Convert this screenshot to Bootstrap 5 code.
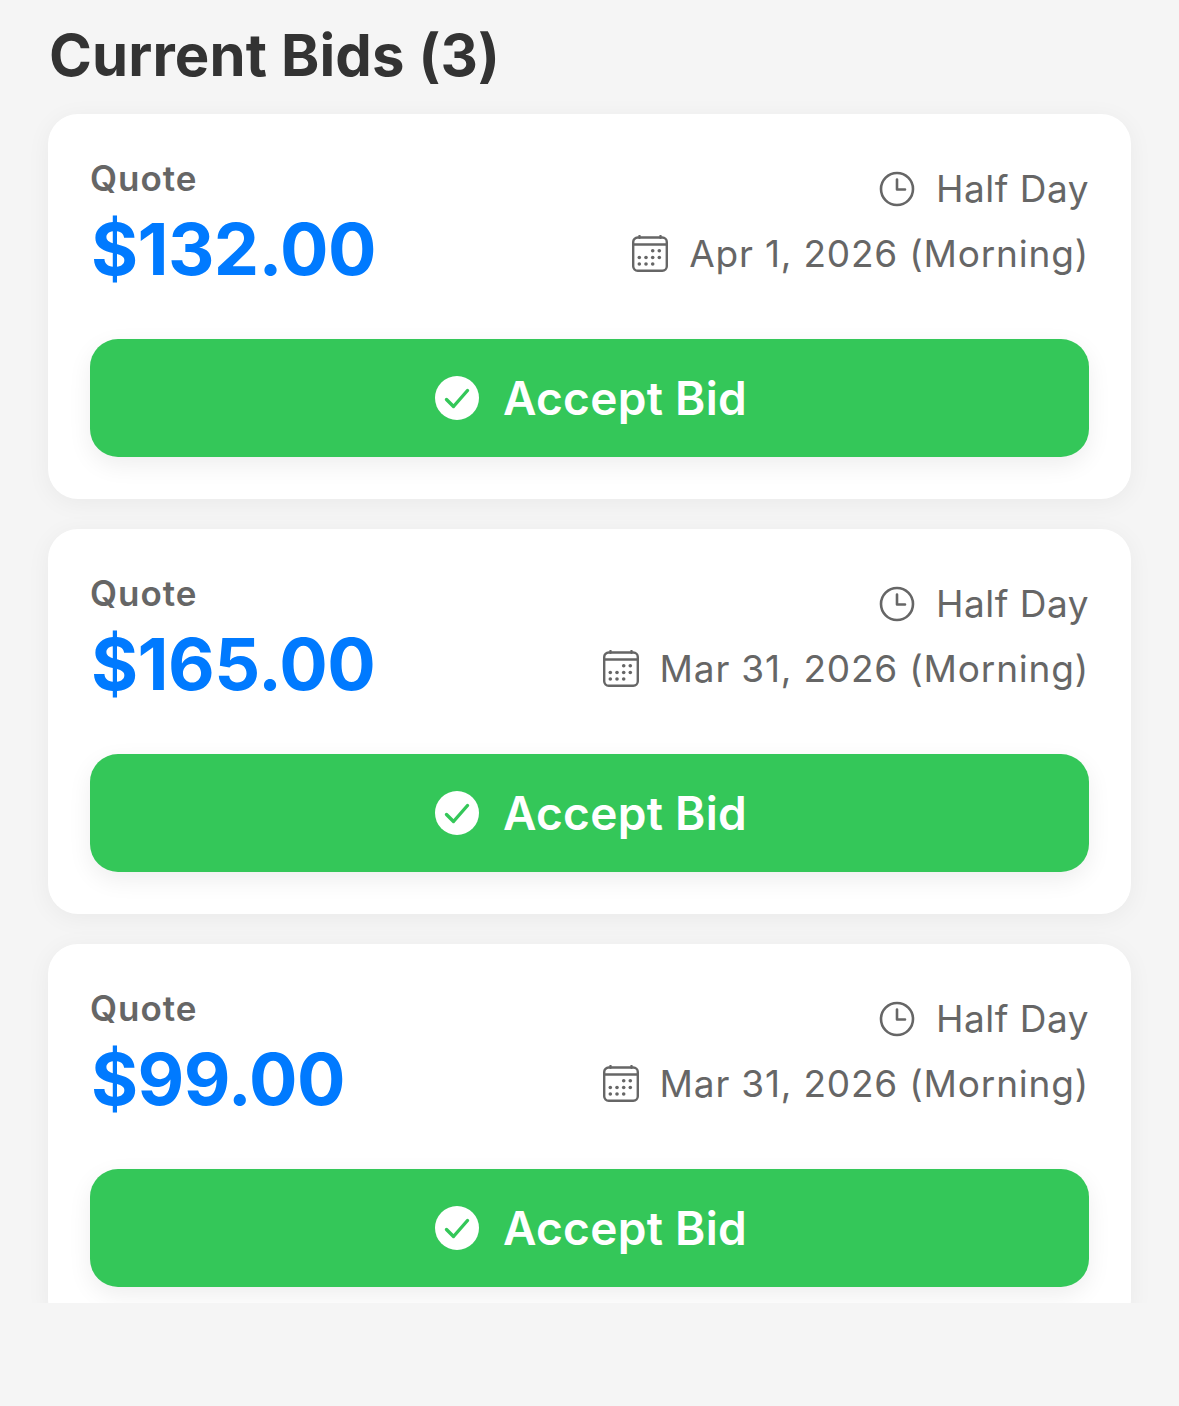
<!DOCTYPE html>
<html lang="en">
<head>
    <meta charset="UTF-8">
    <title>Current Bids</title>
    <link href="https://cdn.jsdelivr.net/npm/bootstrap@5.3.0/dist/css/bootstrap.min.css" rel="stylesheet">
    <style>
        html, body { height: 100%; }
        body { background: #f5f5f5; font-family: Inter, "Liberation Sans", sans-serif; overflow: hidden; }
        .bids-scroll { height: 1303px; overflow: hidden; padding: 0 48px; }
        .bids-title { font-size: 58px; font-weight: 700; line-height: 70px; color: #333; margin: 0; padding: 20px 0 24px 1px; letter-spacing: .13px; }
        .bid-card { background: #fff; border-radius: 30px; padding: 42px; height: 385px; margin-bottom: 30px; box-shadow: 0 4px 24px rgba(0,0,0,.05); }
        .bid-top { height: 183px; }
        .quote-label { font-size: 35px; font-weight: 600; line-height: 46px; color: #666; margin-top: -1px; letter-spacing: 1px; }
        .quote-price { font-size: 72px; font-weight: 700; line-height: 84px; color: #007aff; letter-spacing: -.6px; margin-top: 6px; padding-left: 1px; }
        .bid-meta { font-size: 37px; line-height: 65px; color: #666; letter-spacing: .8px; }
        .bid-meta svg { flex: none; }
        .meta-row { gap: 21px; }
        .meta-time { letter-spacing: .5px; }
        .btn-accept { height: 118px; padding: 0 0 0 3px; border-radius: 28px; background: #34c759; border: 0; color: #fff; font-size: 46px; font-weight: 600; box-shadow: 0 8px 24px rgba(0,0,0,.07); gap: 24px; letter-spacing: .3px; }
        .btn-accept:hover { background: #34c759; color: #fff; }
    </style>
</head>
<body>
<svg width="0" height="0" class="d-block">
    <defs>
        <symbol id="ico-clock" viewBox="0 0 36 36">
            <circle cx="18" cy="18" r="16" fill="none" stroke="#666" stroke-width="2.6"/>
            <path d="M18 8.5V18.5H26" fill="none" stroke="#666" stroke-width="2.6" stroke-linecap="round" stroke-linejoin="round"/>
        </symbol>
        <symbol id="ico-cal" viewBox="0 0 36 37">
            <rect x="1.2" y="2.5" width="33.6" height="33.3" rx="4.5" fill="none" stroke="#666" stroke-width="2.4"/>
            <path d="M1.2 9.5H34.8" stroke="#666" stroke-width="2.4"/>
            <path d="M7.5 .8V3M28.5 .8V3" stroke="#666" stroke-width="2.2" stroke-linecap="round"/>
            <g fill="#666">
                <circle cx="20.7" cy="15.7" r="1.8"/><circle cx="27.3" cy="15.7" r="1.8"/>
                <circle cx="7.3" cy="22.5" r="1.8"/><circle cx="14" cy="22.5" r="1.8"/><circle cx="20.7" cy="22.5" r="1.8"/><circle cx="27.3" cy="22.5" r="1.8"/>
                <circle cx="7.3" cy="29" r="1.8"/><circle cx="14" cy="29" r="1.8"/><circle cx="20.7" cy="29" r="1.8"/>
            </g>
        </symbol>
        <symbol id="ico-check" viewBox="0 0 44 44">
            <circle cx="22" cy="22" r="22" fill="#fff"/>
            <path d="M11.5 23.5L18.5 30.5L32.5 14.5" fill="none" stroke="#34c759" stroke-width="3.4" stroke-linecap="round" stroke-linejoin="round"/>
        </symbol>
    </defs>
</svg>
<div class="bids-scroll">
    <h1 class="bids-title">Current Bids (3)</h1>

    <div class="bid-card">
        <div class="bid-top d-flex justify-content-between">
            <div>
                <div class="quote-label">Quote</div>
                <div class="quote-price">$132.00</div>
            </div>
            <div class="bid-meta d-flex flex-column align-items-end">
                <div class="meta-row meta-time d-flex align-items-center"><svg width="36" height="36"><use href="#ico-clock"/></svg><span>Half Day</span></div>
                <div class="meta-row d-flex align-items-center"><svg width="36" height="37"><use href="#ico-cal"/></svg><span>Apr 1, 2026 (Morning)</span></div>
            </div>
        </div>
        <button class="btn btn-accept w-100 d-flex align-items-center justify-content-center"><svg width="44" height="44"><use href="#ico-check"/></svg>Accept Bid</button>
    </div>

    <div class="bid-card">
        <div class="bid-top d-flex justify-content-between">
            <div>
                <div class="quote-label">Quote</div>
                <div class="quote-price">$165.00</div>
            </div>
            <div class="bid-meta d-flex flex-column align-items-end">
                <div class="meta-row meta-time d-flex align-items-center"><svg width="36" height="36"><use href="#ico-clock"/></svg><span>Half Day</span></div>
                <div class="meta-row d-flex align-items-center"><svg width="36" height="37"><use href="#ico-cal"/></svg><span>Mar 31, 2026 (Morning)</span></div>
            </div>
        </div>
        <button class="btn btn-accept w-100 d-flex align-items-center justify-content-center"><svg width="44" height="44"><use href="#ico-check"/></svg>Accept Bid</button>
    </div>

    <div class="bid-card">
        <div class="bid-top d-flex justify-content-between">
            <div>
                <div class="quote-label">Quote</div>
                <div class="quote-price">$99.00</div>
            </div>
            <div class="bid-meta d-flex flex-column align-items-end">
                <div class="meta-row meta-time d-flex align-items-center"><svg width="36" height="36"><use href="#ico-clock"/></svg><span>Half Day</span></div>
                <div class="meta-row d-flex align-items-center"><svg width="36" height="37"><use href="#ico-cal"/></svg><span>Mar 31, 2026 (Morning)</span></div>
            </div>
        </div>
        <button class="btn btn-accept w-100 d-flex align-items-center justify-content-center"><svg width="44" height="44"><use href="#ico-check"/></svg>Accept Bid</button>
    </div>
</div>
<script src="https://cdn.jsdelivr.net/npm/bootstrap@5.3.0/dist/js/bootstrap.bundle.min.js"></script>
</body>
</html>
